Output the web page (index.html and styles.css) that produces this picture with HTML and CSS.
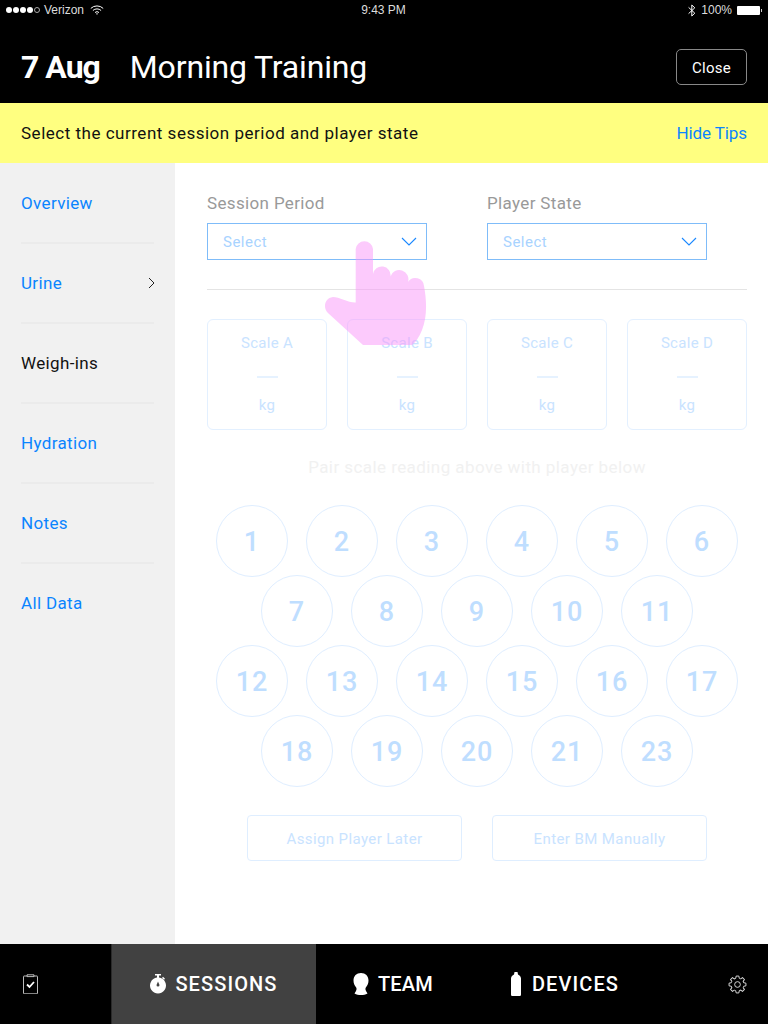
FILE: index.html
```html
<!DOCTYPE html>
<html lang="en">
<head>
    <meta charset="UTF-8">
    <meta name="viewport" content="width=device-width, initial-scale=1.0">
    <title>Weigh-ins</title>
    <link rel="stylesheet" href="styles.css">
</head>
<body>
    <div class="app">
        <header class="top">
            <div class="status">
                <div class="status-left">
                    <span class="signal"><i></i><i></i><i></i><i></i><i class="off"></i></span>
                    <span>Verizon</span>
                    <svg class="wifi" width="14" height="10" viewBox="0 0 14 10" fill="none" stroke="#fff" stroke-width="1">
                        <path d="M.8 3.4a9 9 0 0 1 12.4 0"/>
                        <path d="M2.9 5.5a6 6 0 0 1 8.2 0"/>
                        <path d="M5 7.5a3 3 0 0 1 4 0"/>
                        <path d="M7 9.8 6 8.8a1.4 1.4 0 0 1 2 0z" fill="#fff" stroke="none"/>
                    </svg>
                </div>
                <div class="status-time">9:43 PM</div>
                <div class="status-right">
                    <svg width="8" height="13" viewBox="0 0 8 13" fill="none" stroke="#fff" stroke-width="1">
                        <path d="M.6 3.4 6.8 9.2 3.8 12V1l3 2.8L.6 9.6"/>
                    </svg>
                    <span>100%</span>
                    <span class="battery"></span>
                </div>
            </div>
            <div class="title-bar">
                <h1><b>7 Aug</b><span>Morning Training</span></h1>
                <button class="close-btn">Close</button>
            </div>
        </header>

        <div class="tips">
            <span>Select the current session period and player state</span>
            <a class="link">Hide Tips</a>
        </div>

        <div class="body">
            <nav class="side">
                <a class="side-item link">Overview</a>
                <a class="side-item link">Urine
                    <svg width="7" height="12" viewBox="0 0 7 12" fill="none" stroke="#222" stroke-width="1"><path d="M1 1l5 5-5 5"/></svg>
                </a>
                <a class="side-item">Weigh-ins</a>
                <a class="side-item link">Hydration</a>
                <a class="side-item link">Notes</a>
                <a class="side-item link last">All Data</a>
            </nav>

            <main class="content">
                <div class="fields">
                    <div class="field">
                        <label>Session Period</label>
                        <div class="select">Select
                            <svg width="16" height="9" viewBox="0 0 16 9" fill="none" stroke="#1a88ff" stroke-width="1.1"><path d="M1 1l7 7 7-7"/></svg>
                        </div>
                    </div>
                    <div class="field">
                        <label>Player State</label>
                        <div class="select">Select
                            <svg width="16" height="9" viewBox="0 0 16 9" fill="none" stroke="#1a88ff" stroke-width="1.1"><path d="M1 1l7 7 7-7"/></svg>
                        </div>
                    </div>
                </div>

                <div class="divider"></div>

                <div class="scales">
                    <div class="scale"><span>Scale A</span><i></i><span>kg</span></div>
                    <div class="scale"><span>Scale B</span><i></i><span>kg</span></div>
                    <div class="scale"><span>Scale C</span><i></i><span>kg</span></div>
                    <div class="scale"><span>Scale D</span><i></i><span>kg</span></div>
                </div>

                <p class="pair">Pair scale reading above with player below</p>

                <div class="players">
                    <div class="row">
                        <div class="num">1</div><div class="num">2</div><div class="num">3</div><div class="num">4</div><div class="num">5</div><div class="num">6</div>
                    </div>
                    <div class="row">
                        <div class="num">7</div><div class="num">8</div><div class="num">9</div><div class="num">10</div><div class="num">11</div>
                    </div>
                    <div class="row">
                        <div class="num">12</div><div class="num">13</div><div class="num">14</div><div class="num">15</div><div class="num">16</div><div class="num">17</div>
                    </div>
                    <div class="row">
                        <div class="num">18</div><div class="num">19</div><div class="num">20</div><div class="num">21</div><div class="num">23</div>
                    </div>
                </div>

                <div class="actions">
                    <button>Assign Player Later</button>
                    <button>Enter BM Manually</button>
                </div>
            </main>
        </div>

        <footer class="tabs">
            <div class="tab tab-check">
                <svg width="15" height="20" viewBox="0 0 15 20" fill="none" stroke="#bbb" stroke-width="1">
                    <path d="M4.5 2H1a.5.5 0 0 0-.5.5v16.8a.5.5 0 0 0 .5.5h13a.5.5 0 0 0 .5-.5V2.500a.5.5 0 0 0-.5-.5h-3.500"/>
                    <path d="M4 .8h7V2.600H4z"/>
                    <path d="M4 10.500l2.500 2.500 4.500-5" stroke="#fff" stroke-width="1.800"/>
                </svg>
            </div>
            <div class="tab tab-sessions active">
                <svg width="16" height="20" viewBox="0 0 16 20" fill="#fff">
                    <path d="M5 0h6v1.500H9v2.100A8 8 0 1 1 7 3.600V1.500H5z"/>
                    <path d="M13 2.800l2 1.900-1 1.100-2-1.900z"/>
                    <path d="M8 7.500l1.500 3.500a1.500 1.500 0 1 1-3 0z" fill="#414141"/>
                </svg>
                SESSIONS
            </div>
            <div class="tab tab-team">
                <svg width="16" height="22" viewBox="0 0 16 22" fill="#fff">
                    <path d="M8 0c4.500 0 7.500 3 7.500 7.500 0 2.800-1 5-2.500 6.800-.7.900-.8 2.200 0 3.700l1.500 2.500c-2 1-4 1.500-6.500 1.500s-4.500-.5-6.500-1.500L3 18c.8-1.500.7-2.800 0-3.700C1.500 12.500.5 10.300.5 7.500.5 3 3.500 0 8 0z"/>
                </svg>
                TEAM
            </div>
            <div class="tab tab-devices">
                <svg width="10" height="24" viewBox="0 0 10 24" fill="#fff">
                    <path d="M3.500 0h3l.5 2.500C8.500 3.200 10 4.500 10 6.500v16c0 1-.7 1.500-1.500 1.500h-7C.7 24 0 23.500 0 22.500v-16C0 4.500 1.500 3.200 3 2.500z"/>
                </svg>
                DEVICES
            </div>
            <div class="tab tab-gear">
                <svg width="19" height="19" viewBox="0 0 20 20" fill="none" stroke="#ddd" stroke-width="1">
                    <path d="M8.130 3.460 8.590 1.110H11.410L11.870 3.460 13.300 4.050"/>
                    <path transform="rotate(45 10 10)" d="M8.130 3.460 8.590 1.110H11.410L11.870 3.460 13.300 4.050"/>
                    <path transform="rotate(90 10 10)" d="M8.130 3.460 8.590 1.110H11.410L11.870 3.460 13.300 4.050"/>
                    <path transform="rotate(135 10 10)" d="M8.130 3.460 8.590 1.110H11.410L11.870 3.460 13.300 4.050"/>
                    <path transform="rotate(180 10 10)" d="M8.130 3.460 8.590 1.110H11.410L11.870 3.460 13.300 4.050"/>
                    <path transform="rotate(225 10 10)" d="M8.130 3.460 8.590 1.110H11.410L11.870 3.460 13.300 4.050"/>
                    <path transform="rotate(270 10 10)" d="M8.130 3.460 8.590 1.110H11.410L11.870 3.460 13.300 4.050"/>
                    <path transform="rotate(315 10 10)" d="M8.130 3.460 8.590 1.110H11.410L11.870 3.460 13.300 4.050"/>
                    <circle cx="10" cy="10" r="3"/>
                </svg>
            </div>
        </footer>

        <!-- tap hint over the form -->
        <svg class="hand" width="102" height="106" viewBox="0 0 102 106">
            <path d="M30.700 62.500V9A8.700 8.700 0 0 1 48 9V34A8.700 8.700 0 0 1 65.500 36.500 8.700 8.700 0 0 1 83 42 8.700 8.700 0 0 1 99 46C102 62 102 78 97 90 94 97 91 102 87 105H38L3 73C-2 69-1 58 8 57 14 57 24 63 30.700 62.500z"/>
        </svg>
    </div>
</body>
</html>
```

FILE: styles.css
```css
* {
    box-sizing: border-box;
}
html, body {
    margin: 0;
    padding: 0;
}
body {
    font-family: Roboto, "Liberation Sans", sans-serif;
    background-color: #fff;
}
.app {
    position: relative;
    width: 768px;
    height: 1024px;
    display: flex;
    flex-direction: column;
    overflow: hidden;
}
.link {
    color: #007aff;
}

/* top bar */
.top {
    height: 103px;
    background-color: #000;
    color: #fff;
}
.status {
    height: 20px;
    padding: 0 7px 0 6px;
    display: grid;
    grid-template-columns: 1fr auto 1fr;
    align-items: center;
    font-family: "Liberation Sans", sans-serif;
    font-size: 12px;
    color: #ddd;
}
.status-left, .status-right {
    display: flex;
    align-items: center;
}
.status-left {
    gap: 4px;
}
.status-left .wifi {
    margin-left: 2px;
}
.status-right {
    justify-content: flex-end;
    gap: 5px;
}
.signal {
    display: flex;
    gap: 1px;
}
.signal i {
    width: 6px;
    height: 6px;
    border-radius: 50%;
    background-color: #fff;
}
.signal i.off {
    background: none;
    border: 1px solid #aaa;
}
.battery {
    position: relative;
    width: 23px;
    height: 9px;
    margin-right: 1px;
    background-color: #fff;
    border-radius: 1px;
}
.battery::after {
    content: "";
    position: absolute;
    right: -2px;
    top: 3px;
    width: 1px;
    height: 3px;
    background-color: #ccc;
}
.title-bar {
    height: 83px;
    padding: 11px 21px 0;
    display: flex;
    align-items: center;
    justify-content: space-between;
}
h1 {
    margin: 0;
    font-size: 32px;
    font-weight: 400;
    line-height: 40px;
    display: flex;
    gap: 30px;
    letter-spacing: -0.16px;
}
h1 b {
    letter-spacing: -1px;
}
.close-btn {
    width: 71px;
    height: 36px;
    background: none;
    border: 1px solid #888;
    border-radius: 5px;
    color: #fff;
    font-family: inherit;
    font-size: 15px;
    letter-spacing: 0.3px;
    padding-top: 2px;
}

/* tips */
.tips {
    height: 60px;
    padding: 0 21px;
    background-color: #ffff80;
    display: flex;
    align-items: center;
    justify-content: space-between;
    font-size: 17px;
    letter-spacing: 0.51px;
    color: #111;
}
.tips .link {
    color: #0a84ff;
    letter-spacing: -0.1px;
}

/* sidebar + form */
.body {
    flex: 1;
    display: flex;
    min-height: 0;
}
.side {
    width: 175px;
    padding: 1px 21px 0;
    background-color: #f1f1f1;
}
.side-item {
    height: 80px;
    display: flex;
    align-items: center;
    justify-content: space-between;
    border-bottom: 2px solid #ebebeb;
    font-size: 17px;
    letter-spacing: 0.35px;
    color: #111;
}
.side-item.link {
    color: #0a84ff;
}
.side-item.last {
    border-bottom-color: transparent;
}
.side-item svg {
    margin-right: -1px;
}
.content {
    flex: 1;
    padding: 30px 21px 0 32px;
}
.fields {
    display: flex;
    gap: 60px;
}
.field label {
    display: block;
    height: 20px;
    line-height: 20px;
    font-size: 17px;
    letter-spacing: 0.35px;
    color: #999;
}
.select {
    width: 220px;
    height: 37px;
    margin-top: 10px;
    padding: 0 9px 0 15px;
    border: 1px solid #7fbcf9;
    display: flex;
    align-items: center;
    justify-content: space-between;
    font-size: 15px;
    letter-spacing: 0.5px;
    color: #a8d3ff;
}
.divider {
    height: 1px;
    margin-top: 29px;
    background-color: #e4e4e4;
}
.scales {
    margin-top: 29px;
    display: flex;
    gap: 20px;
}
.scale {
    width: 120px;
    height: 111px;
    padding-top: 13px;
    border: 1px solid #e3f0ff;
    border-radius: 6px;
    display: flex;
    flex-direction: column;
    align-items: center;
    font-size: 15px;
    letter-spacing: 0.3px;
    line-height: 20px;
    color: #c9e3ff;
}
.scale i {
    width: 21px;
    height: 2px;
    margin: 23px 0 17px;
    background-color: #e6f2ff;
}
.pair {
    margin: 27px 0 0;
    text-align: center;
    font-size: 17px;
    line-height: 20px;
    letter-spacing: 0.43px;
    color: #f1f1f1;
}
.players {
    margin-top: 28px;
}
.row {
    display: flex;
    justify-content: center;
    gap: 18px;
    margin-bottom: -2px;
}
.num {
    width: 72px;
    height: 72px;
    padding-top: 2px;
    border: 1px solid #dfeeff;
    border-radius: 50%;
    display: flex;
    align-items: center;
    justify-content: center;
    font-size: 27px;
    font-weight: 500;
    letter-spacing: 1px;
    color: #bfdeff;
}
.actions {
    margin-top: 30px;
    display: flex;
    justify-content: center;
    gap: 30px;
}
.actions button {
    width: 215px;
    height: 46px;
    padding-top: 2px;
    background: none;
    border: 1px solid #dfeeff;
    border-radius: 4px;
    font-family: inherit;
    font-size: 15px;
    letter-spacing: 0.4px;
    color: #c9e3ff;
}

/* bottom tabs */
.tabs {
    height: 80px;
    background-color: #000;
    display: flex;
}
.tab {
    display: flex;
    align-items: center;
    justify-content: center;
    gap: 9px;
    color: #fff;
    font-size: 20px;
    font-weight: 500;
    letter-spacing: 1.1px;
}
.tab-check {
    width: 111px;
    justify-content: flex-start;
    padding-left: 23px;
}
.tab-sessions {
    width: 205px;
}
.tab.active {
    background-color: #414141;
    border-left: 1px solid #2a2a2a;
}
.tab-team {
    width: 154px;
    letter-spacing: 0.2px;
}
.tab-devices {
    width: 186px;
    padding-left: 4px;
    gap: 11px;
}
.tab-gear {
    flex: 1;
    justify-content: flex-end;
    padding-right: 21px;
}

.hand {
    position: absolute;
    left: 325px;
    top: 240px;
    fill: rgb(250, 150, 250);
    opacity: 0.5;
}
```
